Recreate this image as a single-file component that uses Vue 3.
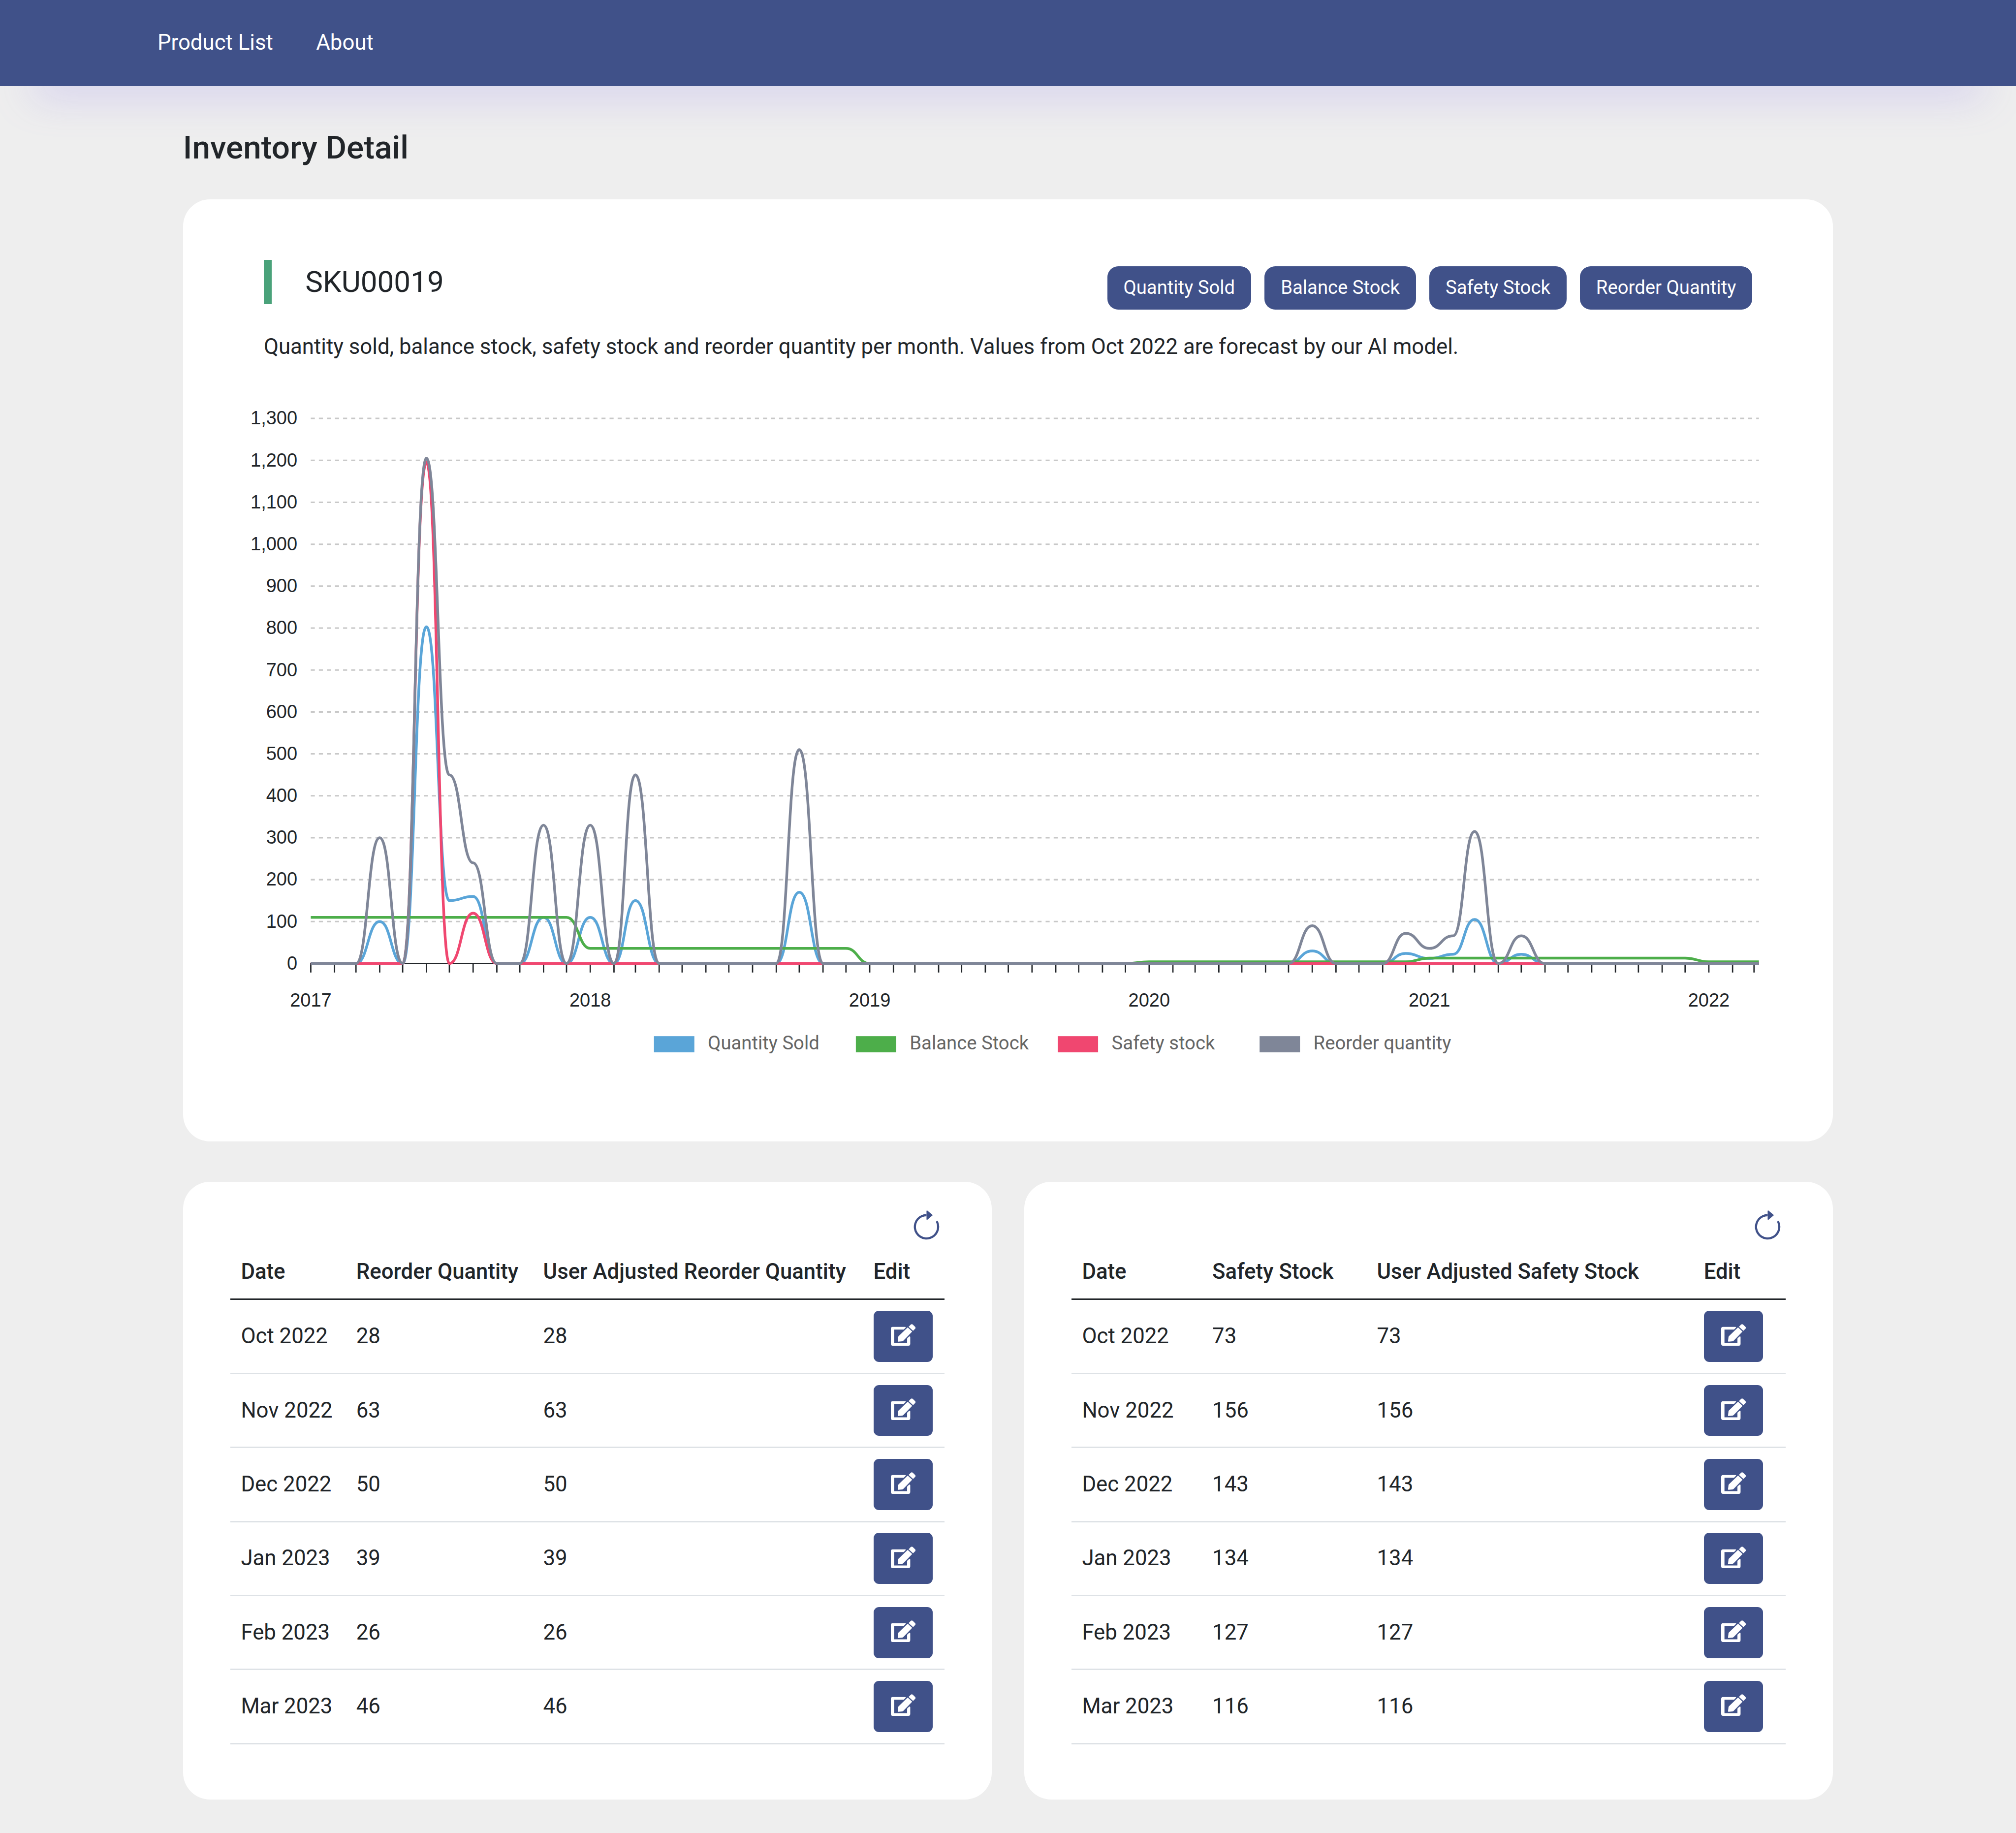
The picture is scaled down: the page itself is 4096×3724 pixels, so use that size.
<script setup>
const links = ['Product List', 'About']
const filters = ['Quantity Sold', 'Balance Stock', 'Safety Stock', 'Reorder Quantity']

// Chart geometry, in chart units
const left = 231
const right = 1307
const base = 716
const unit = 405 / 1300
const dayWidth = 0.5689
const start = Date.UTC(2017, 0, 1)
const dayX = (year, month) => left + ((Date.UTC(year, month, 1) - start) / 86400000) * dayWidth
const valueY = (v) => base - v * unit

const months = []
for (let i = 0; i < 63; i++) {
  const year = 2017 + Math.floor(i / 12)
  const month = i % 12
  months.push({ i, year, month, x: dayX(year, month) })
}
const years = months.filter((m) => m.month === 0)
const gridLines = Array.from({ length: 14 }, (_, i) => ({
  value: i * 100,
  label: (i * 100).toLocaleString('en-US'),
  y: valueY(i * 100),
}))

const sparse = (points) => months.map((m) => points[m.year + '-' + (m.month + 1)] ?? 0)
const sold = sparse({
  '2017-4': 100, '2017-6': 803, '2017-7': 150, '2017-8': 160, '2017-11': 110,
  '2018-1': 110, '2018-3': 150, '2018-10': 170, '2020-8': 30, '2020-12': 24,
  '2021-1': 12, '2021-2': 22, '2021-3': 105, '2021-5': 22,
})
const reorder = sparse({
  '2017-4': 300, '2017-6': 1205, '2017-7': 450, '2017-8': 240, '2017-11': 330,
  '2018-1': 330, '2018-3': 450, '2018-10': 510, '2020-8': 90, '2020-12': 72,
  '2021-1': 36, '2021-2': 66, '2021-3': 315, '2021-5': 66,
})
const safety = sparse({ '2017-6': 1195, '2017-8': 120 })
const balance = months.map(({ i }) => {
  if (i < 12) return 110
  if (i < 24) return 36
  if (i < 36) return 0
  if (i < 48) return 4
  if (i < 60) return 13
  return 4
})

// Horizontal tangents at every point, handles at the middle of each interval
function curve(values) {
  let d = `M${months[0].x} ${valueY(values[0])}`
  for (let i = 1; i < months.length; i++) {
    const mid = (months[i - 1].x + months[i].x) / 2
    const y0 = valueY(values[i - 1])
    const y1 = valueY(values[i])
    d += `C${mid} ${y0} ${mid} ${y1} ${months[i].x} ${y1}`
  }
  return d + `H${right}`
}

const series = [
  { name: 'Quantity Sold', color: '#5aa5d8', d: curve(sold) },
  { name: 'Balance Stock', color: '#4dae4a', d: curve(balance) },
  { name: 'Safety stock', color: '#f04770', d: curve(safety) },
  { name: 'Reorder quantity', color: '#7f8698', d: curve(reorder) },
]

const dates = ['Oct 2022', 'Nov 2022', 'Dec 2022', 'Jan 2023', 'Feb 2023', 'Mar 2023']
const tables = [
  {
    id: 'reorder',
    head: ['Date', 'Reorder Quantity', 'User Adjusted Reorder Quantity', 'Edit'],
    values: [28, 63, 50, 39, 26, 46],
  },
  {
    id: 'safety',
    head: ['Date', 'Safety Stock', 'User Adjusted Safety Stock', 'Edit'],
    values: [73, 156, 143, 134, 127, 116],
  },
]
</script>

<template>
  <div class="page">
    <nav class="navbar">
      <a v-for="l in links" :key="l">{{ l }}</a>
    </nav>
    <main>
      <h1>Inventory Detail</h1>
      <section class="card chart-card">
        <header class="card-head">
          <h2>SKU00019</h2>
          <div class="filters">
            <button v-for="f in filters" :key="f">{{ f }}</button>
          </div>
        </header>
        <p class="desc">
          Quantity sold, balance stock, safety stock and reorder quantity per month. Values from Oct 2022 are forecast by our AI model.
        </p>
        <svg class="chart" viewBox="180 300 1150 500">
          <g class="grid">
            <line v-for="g in gridLines.slice(1)" :key="g.value" :x1="left" :x2="right" :y1="g.y" :y2="g.y" />
          </g>
          <g class="axis">
            <line :x1="left" :x2="right" :y1="base" :y2="base" />
            <line v-for="m in months" :key="m.i" :x1="m.x" :x2="m.x" :y1="base - 0.5" :y2="base + 6.7" />
          </g>
          <g class="labels y">
            <text v-for="g in gridLines" :key="g.value" x="221" :y="g.y + 4.5">{{ g.label }}</text>
          </g>
          <g class="labels x">
            <text v-for="y in years" :key="y.year" :x="y.x" y="748">{{ y.year }}</text>
          </g>
          <path v-for="s in series" :key="s.name" class="line" :d="s.d" :stroke="s.color" />
          <g v-for="(s, i) in series" :key="s.name">
            <rect :x="486 + i * 150" y="770" width="30" height="12" :fill="s.color" />
            <text class="legend" :x="526 + i * 150" y="779.7">{{ s.name }}</text>
          </g>
        </svg>
      </section>

      <div class="tables">
        <section v-for="t in tables" :key="t.id" class="card table-card" :class="t.id">
          <div class="tools">
            <svg class="reload" viewBox="0 0 16 16">
              <path d="M8 3a5 5 0 1 0 4.546 2.914.5.5 0 0 1 .908-.417A6 6 0 1 1 8 2z" />
              <path d="M8 4.466V.534a.25.25 0 0 1 .41-.192l2.36 1.966c.12.1.12.284 0 .384L8.41 4.658A.25.25 0 0 1 8 4.466" />
            </svg>
          </div>
          <div class="row head">
            <span v-for="h in t.head" :key="h">{{ h }}</span>
          </div>
          <div v-for="(d, i) in dates" :key="d" class="row">
            <span>{{ d }}</span>
            <span>{{ t.values[i] }}</span>
            <span>{{ t.values[i] }}</span>
            <span>
              <button class="edit">
                <svg viewBox="0 0 166 145">
                  <path d="M97 19Q103 20 99 24L88 35Q86 37 83 37H22V127H109V99Q109 96 111 94L122 84Q129 80 130 87V133Q130 145 118 145H12Q0 145 0 133V31Q0 19 12 19Z" />
                  <path d="M113 22L143 50L84 111Q81 114 77 115L50 118Q46 118 46 114L49 87Q50 83 53 80Z" />
                  <path d="M119 18L133 4Q140-2 147 3L163 19Q168 25 163 31L149 45Z" />
                </svg>
              </button>
            </span>
          </div>
        </section>
      </div>
    </main>
  </div>
</template>

<style>
/* 1rem equals 10 layout units */
html {
  font-size: 27.34375px;
}
body {
  margin: 0;
  background: #eee;
  overflow: hidden;
}
</style>

<style scoped>
.page {
  height: 136.2rem;
  background: #eee;
  color: #212529;
  font-family: Roboto, sans-serif;
  font-size: 1.6rem;
  line-height: 2.4rem;
  overflow: hidden;
}
.navbar {
  display: flex;
  align-items: center;
  gap: 3.2rem;
  height: 6.4rem;
  padding-left: 11.7rem;
  background: #405189;
  color: #fff;
  box-shadow: 0 3rem 3rem -2.5rem rgba(150, 135, 240, 0.44);
}
.navbar a {
  padding-bottom: 0.05rem;
}
main {
  width: 122.6rem;
  margin: 0 auto;
}
h1 {
  margin: 0;
  padding: 3.14rem 0 2.38rem;
  font-size: 2.4rem;
  line-height: 2.88rem;
  font-weight: 500;
}
.card {
  box-sizing: border-box;
  background: #fff;
  border-radius: 2rem;
}
.chart-card {
  height: 70rem;
  padding: 4.5rem 6rem 0;
}
.card-head {
  display: flex;
  justify-content: space-between;
  height: 3.3rem;
}
h2 {
  margin: 0;
  padding-left: 2.5rem;
  border-left: 0.6rem solid #4aa27a;
  font-size: 2.2rem;
  line-height: 3.3rem;
  font-weight: 400;
}
.filters {
  display: flex;
  gap: 1rem;
  margin-top: 0.5rem;
}
button {
  border: 0;
  background: #405189;
  color: #fff;
  font-family: inherit;
}
.filters button {
  height: 3.2rem;
  padding: 0 1.2rem 0.1rem;
  border-radius: 0.8rem;
  font-size: 1.4rem;
  white-space: nowrap;
}
.desc {
  margin: 1.98rem 0 3.02rem;
  font-size: 1.599rem;
  white-space: nowrap;
}
.chart {
  display: block;
  width: 115rem;
  height: 50rem;
  margin-left: -1.6rem;
}
.grid line {
  stroke: #c8c8c8;
  stroke-width: 1.1;
  stroke-dasharray: 3 3;
}
.axis line {
  stroke: #212529;
  stroke-width: 1;
}
.labels {
  font-family: "Liberation Sans", sans-serif;
  font-size: 13.9px;
  fill: #212529;
}
.labels.y {
  text-anchor: end;
}
.labels.x {
  text-anchor: middle;
}
.line {
  fill: none;
  stroke-width: 2;
}
.legend {
  font-size: 14px;
  fill: #666;
}
.tables {
  display: grid;
  grid-template-columns: 1fr 1fr;
  gap: 2.4rem;
  margin-top: 3rem;
}
.table-card {
  height: 45.9rem;
  padding: 0 3.5rem;
}
.tools {
  display: flex;
  justify-content: flex-end;
  box-sizing: border-box;
  height: 4.7rem;
  padding: 2.1rem 0.1rem 0 0;
}
.reload {
  width: 2.52rem;
  height: 2.52rem;
  fill: #405189;
}
.row {
  display: grid;
  align-items: center;
  box-sizing: border-box;
  height: 5.5rem;
  border-bottom: 3px solid #dee2e6;
}
.reorder .row {
  grid-template-columns: 8.57rem 13.89rem 24.54rem 6.1rem;
}
.safety .row {
  grid-template-columns: 9.68rem 12.23rem 24.29rem 6.9rem;
}
.row.head {
  height: 4.1rem;
  font-weight: 500;
  border-bottom-color: #212529;
}
.row span {
  padding-left: 0.8rem;
  white-space: nowrap;
}
.edit {
  display: flex;
  align-items: center;
  justify-content: center;
  width: 4.4rem;
  height: 3.8rem;
  padding: 0 0 0.2rem;
  border-radius: 0.4rem;
}
.edit svg {
  width: 1.84rem;
  height: 1.61rem;
  fill: #fff;
}
</style>
